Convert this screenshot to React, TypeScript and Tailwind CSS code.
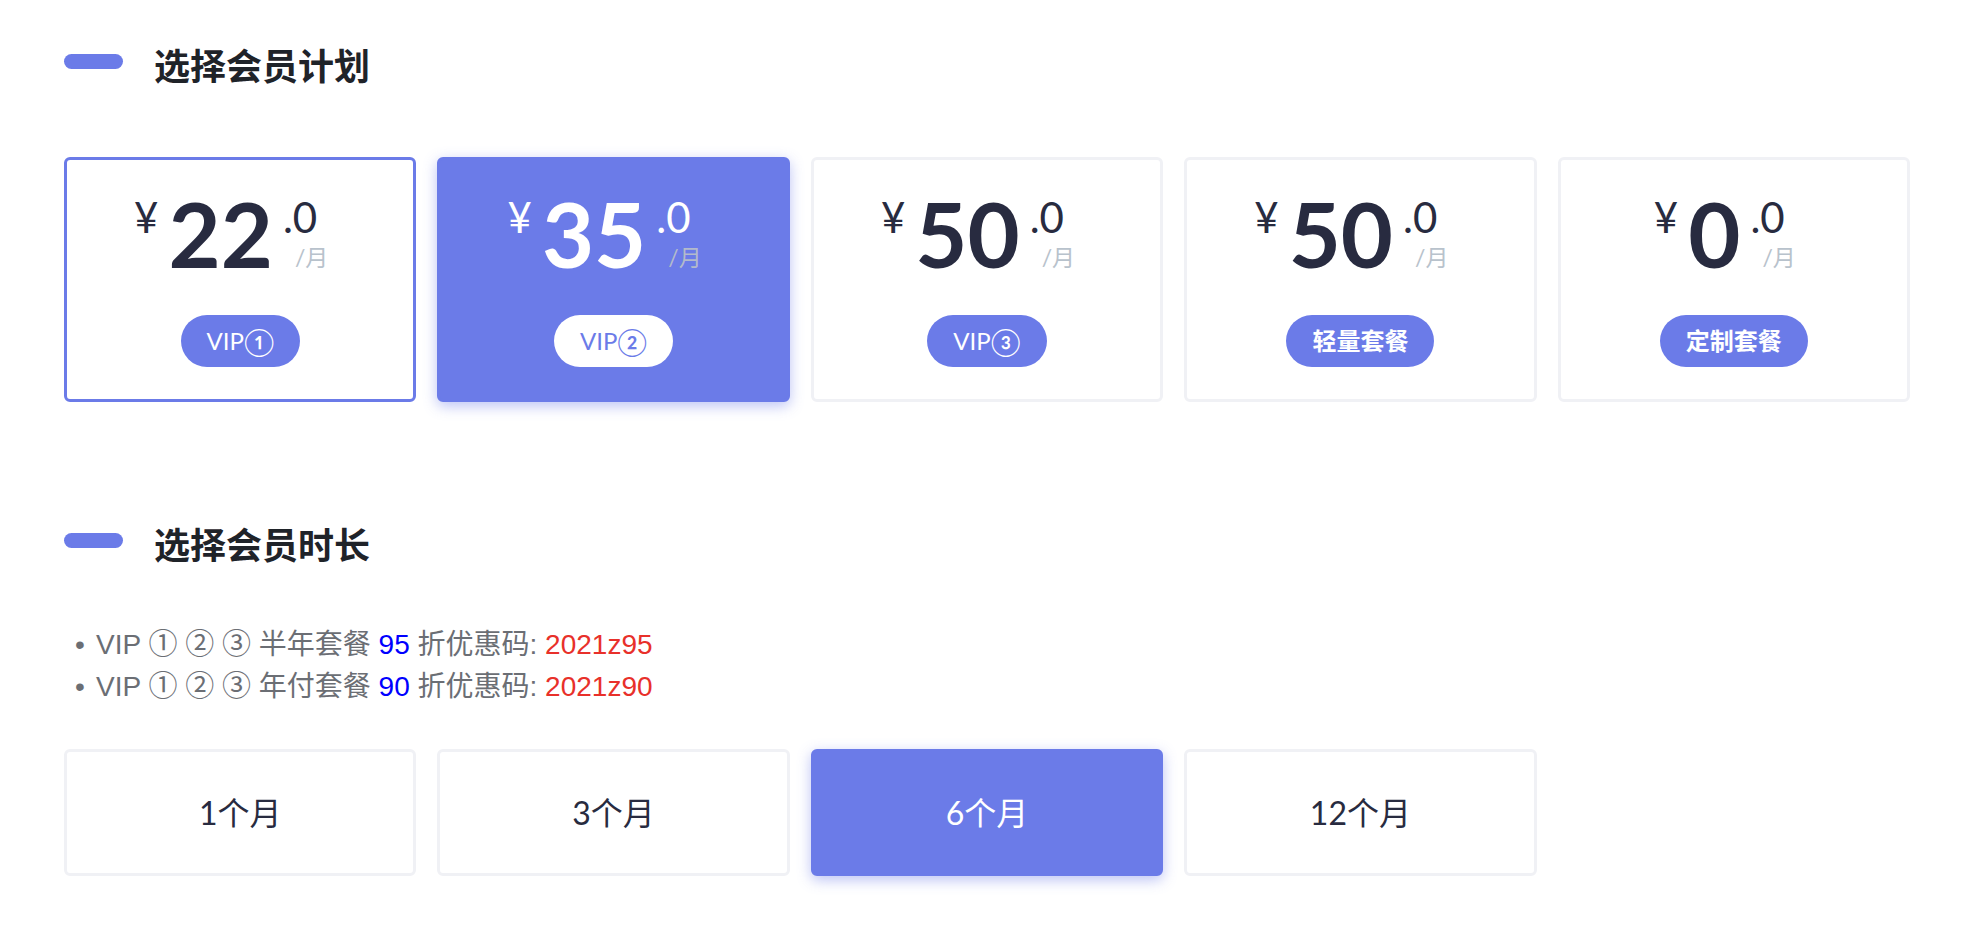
import React from "react";

const plans = [
  { price: "22", name: "VIP", num: "①", state: "outlined" },
  { price: "35", name: "VIP", num: "②", state: "active" },
  { price: "50", name: "VIP", num: "③", state: "" },
  { price: "50", name: "轻量套餐", num: "", state: "" },
  { price: "0", name: "定制套餐", num: "", state: "" },
];

const durations = ["1个月", "3个月", "6个月", "12个月"];

const SectionTitle = ({ text }: { text: string }) => {
  return (
    <div className="flex items-start">
      <div className="mt-[6px] h-[15px] w-[59px] rounded-full bg-[#6b7be8]"></div>
      <h2 className="ml-[31px] text-[36px] leading-none font-bold text-[#1f2329]">{text}</h2>
    </div>
  );
};

const PlanCard = ({ price, name, num, state }: { price: string; name: string; num: string; state: string }) => {
  const active = state === "active";
  const cardClass = active
    ? "border-[#6b7be8] bg-[#6b7be8] text-white shadow-[0_4px_14px_rgba(107,123,232,0.45)]"
    : state === "outlined"
      ? "border-[#6b7be8] bg-white text-[#282b40]"
      : "border-[#f0f1f5] bg-white text-[#282b40]";

  return (
    <div className={`flex h-[245px] flex-col items-center rounded-[6px] border-[3px] pt-[28px] ${cardClass}`}>
      <div className="flex items-start pr-[18px]">
        <span className="mt-[8px] text-[42px] leading-none">¥</span>
        <span className="ml-[10px] text-[90px] leading-none font-bold">{price}</span>
        <div className="ml-[10px] flex flex-col">
          <span className="mt-[8px] text-[42px] leading-none">.0</span>
          <span className={`mt-[8px] ml-[12px] text-[23px] leading-none ${active ? "text-[#b3bacb]" : "text-[#b8c2cc]"}`}>
            /月
          </span>
        </div>
      </div>
      <div
        className={`mt-[37px] flex h-[52px] items-center rounded-full px-[26px] text-[24px] ${
          num ? "font-normal" : "font-bold"
        } ${active ? "bg-white text-[#6b7be8]" : "bg-[#6b7be8] text-white"}`}
      >
        {name}
        {num && <span className="text-[27px] leading-none">{num}</span>}
      </div>
    </div>
  );
};

const Promo = ({ plan, rate, code }: { plan: string; rate: string; code: string }) => {
  return (
    <li className="flex h-[42px]">
      <span className="w-[21px]">•</span>
      <span>
        VIP <span className="text-[29px] leading-none">①</span> <span className="text-[29px] leading-none">②</span>{" "}
        <span className="text-[29px] leading-none">③</span> {plan} <span className="text-[#0000ff]">{rate}</span>{" "}
        折优惠码: <span className="text-[#e8302a]">{code}</span>
      </span>
    </li>
  );
};

export default function App() {
  return (
    <div className="min-h-screen bg-white pt-[48px] pr-[72px] pb-[40px] pl-[64px] font-['Lato','Noto_Sans_CJK_SC',sans-serif]">
      <SectionTitle text="选择会员计划" />

      <div className="mt-[73px] grid grid-cols-5 gap-[21px]">
        {plans.map((p, i) => (
          <PlanCard key={i} {...p} />
        ))}
      </div>

      <div className="mt-[125px]">
        <SectionTitle text="选择会员时长" />
      </div>

      <ul className="mt-[61px] pl-[11px] font-['Liberation_Sans','Noto_Sans_CJK_SC',sans-serif] text-[28px] leading-[42px] text-[#6b6e74]">
        <Promo plan="半年套餐" rate="95" code="2021z95" />
        <Promo plan="年付套餐" rate="90" code="2021z90" />
      </ul>

      <div className="mt-[41px] grid grid-cols-5 gap-[21px]">
        {durations.map((d, i) => (
          <button
            key={d}
            className={`flex h-[127px] items-center justify-center rounded-[6px] border-[3px] text-[32px] ${
              i === 2
                ? "border-[#6b7be8] bg-[#6b7be8] text-white shadow-[0_4px_14px_rgba(107,123,232,0.45)]"
                : "border-[#f0f1f5] bg-white text-[#282b40]"
            }`}
          >
            {d}
          </button>
        ))}
      </div>
    </div>
  );
}
